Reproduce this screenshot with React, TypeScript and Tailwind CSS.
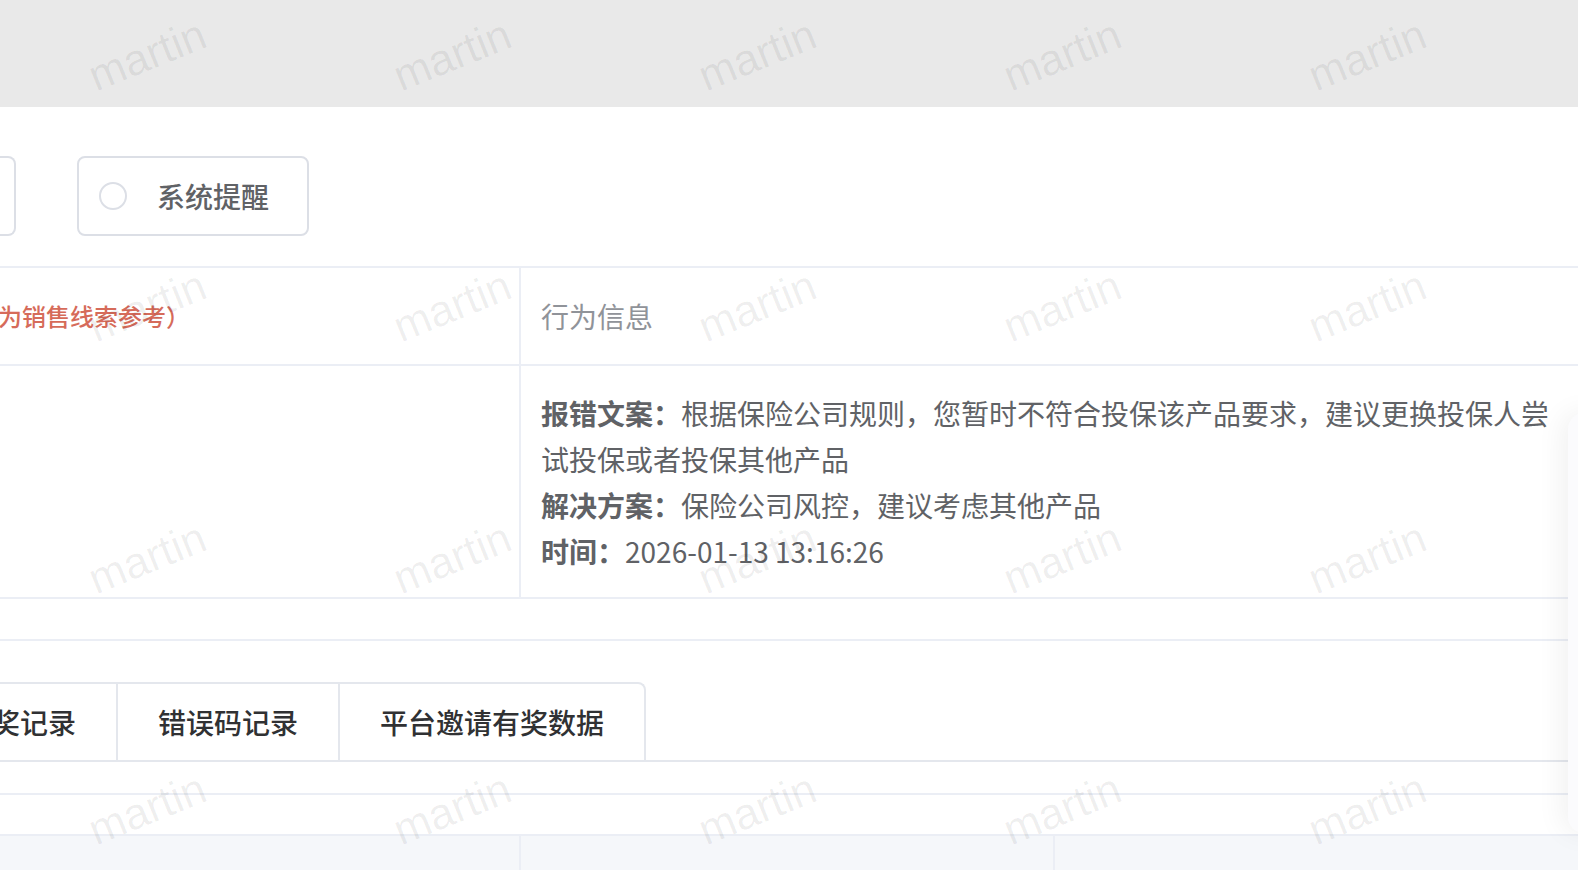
const wmCells = Array.from({ length: 30 }, (_, i) => i);

function WatermarkLayer({ top, tone }: { top: string; tone: string }) {
  return (
    <div className={`absolute left-[-5px] grid grid-cols-[repeat(6,305px)] grid-rows-[repeat(5,251.5px)] ${top}`}>
      {wmCells.map((i) => (
        <div key={i} className="flex items-center justify-center">
          <span className={`-rotate-[22deg] font-['Liberation_Sans',sans-serif] text-[44px] ${tone}`}>martin</span>
        </div>
      ))}
    </div>
  );
}

function Watermarks() {
  return (
    <div className="pointer-events-none absolute inset-0 z-10 overflow-hidden">
      <WatermarkLayer top="top-[-111px]" tone="text-black/[0.025]" />
      <WatermarkLayer top="top-[-71px]" tone="text-black/[0.065]" />
    </div>
  );
}

export default function App() {
  return (
    <div className="relative h-[870px] w-full overflow-hidden bg-white font-['Noto_Sans_CJK_SC',sans-serif]">
      <div className="h-[107px] bg-[#e9e9e9]" />

      {/* 消息类型 */}
      <div className="mt-[49px] flex h-[80px] gap-[61px]">
        <div className="h-full w-[16px] rounded-r-[8px] border-y-2 border-r-2 border-[#dcdfe6]" />
        <label className="flex h-full items-center rounded-[8px] border-2 border-[#dcdfe6] pl-[20px] pr-[38px]">
          <span className="h-[28px] w-[28px] rounded-full border-2 border-[#dcdfe6]" />
          <span className="pl-[30px] text-[28px] font-medium text-[#606266]">系统提醒</span>
        </label>
      </div>

      {/* 信息表 */}
      <div className="mt-[30px] border-y-2 border-[#ebeef5]">
        <div className="flex h-[98px] border-b-2 border-[#ebeef5]">
          <div className="flex w-[521px] shrink-0 items-center overflow-hidden border-r-2 border-[#ebeef5]">
            <span className="-ml-[2px] whitespace-nowrap text-[24px] font-medium text-[#d66b5a]">为销售线索参考）</span>
          </div>
          <div className="flex items-center px-[20px] text-[28px] text-[#909399]">行为信息</div>
        </div>
        <div className="flex">
          <div className="w-[521px] shrink-0 border-r-2 border-[#ebeef5]" />
          <div className="w-[1060px] shrink-0 px-[20px] pb-[23px] pt-[24px] text-[28px] leading-[46px] text-[#606266]">
            <p>
              <span className="font-bold">报错文案：</span>
              根据保险公司规则，您暂时不符合投保该产品要求，建议更换投保人尝试投保或者投保其他产品
            </p>
            <p>
              <span className="font-bold">解决方案：</span>
              保险公司风控，建议考虑其他产品
            </p>
            <p>
              <span className="font-bold">时间：</span>
              2026-01-13 13:16:26
            </p>
          </div>
        </div>
      </div>
      <div className="h-[42px] border-b-2 border-[#ebeef5]" />

      {/* 标签页 */}
      <div className="mt-[41px] flex h-[80px] border-b-2 border-[#e4e7ed]">
        <div className="flex h-full rounded-tr-[8px] border-r-2 border-t-2 border-[#e4e7ed] text-[28px] font-medium text-[#303133]">
          <div className="flex w-[118px] items-center justify-end overflow-hidden whitespace-nowrap border-r-2 border-[#e4e7ed] pr-[40px]">
            邀请有奖记录
          </div>
          <div className="flex items-center border-r-2 border-[#e4e7ed] px-[40px]">错误码记录</div>
          <div className="flex items-center px-[40px]">平台邀请有奖数据</div>
        </div>
      </div>
      <div className="mt-[31px] h-[2px] bg-[#ebeef5]" />

      <div className="mt-[39px] flex h-[60px] border-t-2 border-[#ebeef5] bg-[#f5f7fa]">
        <div className="w-[521px] shrink-0 border-r-2 border-[#ebeef5]" />
        <div className="w-[534px] shrink-0 border-r-2 border-[#ebeef5]" />
        <div className="flex-1" />
      </div>

      {/* 右侧浮层 */}
      <div className="absolute left-[1568px] top-[413px] h-[420px] w-[60px] rounded-[16px] bg-[#fbfbfd] shadow-[-6px_0_28px_rgba(0,0,0,0.06)]" />

      <Watermarks />
    </div>
  );
}
